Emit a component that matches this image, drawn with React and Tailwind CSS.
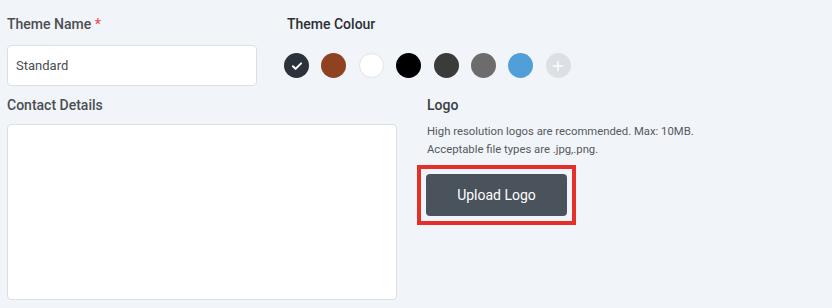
import React, { useState } from "react";

const swatches = [
  { color: "bg-[#2b323b]", selected: true },
  { color: "bg-[#8f4220]" },
  { color: "bg-white border border-[#e2e4e7]" },
  { color: "bg-black" },
  { color: "bg-[#3b3b3b]" },
  { color: "bg-[#6c6c6c]" },
  { color: "bg-[#519fd8]" },
];

const App = () => {
  const [name, setName] = useState("Standard");

  return (
    <div className="w-[832px] h-[308px] bg-[#f1f4f8] overflow-hidden font-['Roboto',sans-serif] pl-[7px]">
      {/* top row */}
      <div className="flex pt-[16px]">
        <div className="w-[250px]">
          <div className="text-[14px] leading-[16px] font-medium text-[#4b4e52]">
            Theme Name <span className="text-[#ec5558]">*</span>
          </div>
          <input
            value={name}
            onChange={(e) => setName(e.target.value)}
            className="mt-[13px] w-[250px] h-[41px] bg-white border border-[#dcdfe3] rounded-[4px] px-[8px] text-[13px] text-[#4a4d51] outline-none"
          />
        </div>

        <div className="ml-[27px]">
          <div className="text-[14px] leading-[16px] font-medium text-[#2c2f33] pl-[3px]">
            Theme Colour
          </div>
          <div className="flex items-center gap-[12.4px] mt-[21px]">
            {swatches.map((s, i) => (
              <div
                key={i}
                className={`w-[25px] h-[25px] rounded-full flex items-center justify-center ${s.color}`}
              >
                {s.selected && (
                  <svg viewBox="0 0 24 24" className="w-[14px] h-[14px]" fill="none" stroke="white" strokeWidth={3.4} strokeLinecap="round" strokeLinejoin="round">
                    <path d="M5 12.5l4.5 4.5L19 7.5" />
                  </svg>
                )}
              </div>
            ))}
            <div className="w-[25px] h-[25px] rounded-full bg-[#dcdfe3] flex items-center justify-center">
              <svg viewBox="0 0 24 24" className="w-[14px] h-[14px]" fill="none" stroke="white" strokeWidth={2.4} strokeLinecap="round">
                <path d="M12 4v16M4 12h16" />
              </svg>
            </div>
          </div>
        </div>
      </div>

      {/* second row */}
      <div className="flex mt-[11px]">
        <div className="w-[390px]">
          <div className="text-[14px] leading-[16px] font-medium text-[#4b4e52]">
            Contact Details
          </div>
          <textarea className="mt-[11px] w-[390px] h-[176px] bg-white border border-[#dcdfe3] rounded-[4px] resize-none outline-none block" />
        </div>

        <div className="ml-[30px]">
          <div className="text-[14px] leading-[16px] font-medium text-[#3a3d41]">
            Logo
          </div>
          <div className="mt-[10px] text-[11.3px] leading-[18px] text-[#56595d]">
            High resolution logos are recommended. Max: 10MB.
            <br />
            Acceptable file types are .jpg,.png.
          </div>
          <div className="mt-[6px] -ml-[10px] w-[159px] border-[4px] border-[#e5302a] p-[5px]">
            <button className="w-[141px] h-[42px] bg-[#4a525b] rounded-[4px] text-white text-[14px]">
              Upload Logo
            </button>
          </div>
        </div>
      </div>
    </div>
  );
};

export default App;
